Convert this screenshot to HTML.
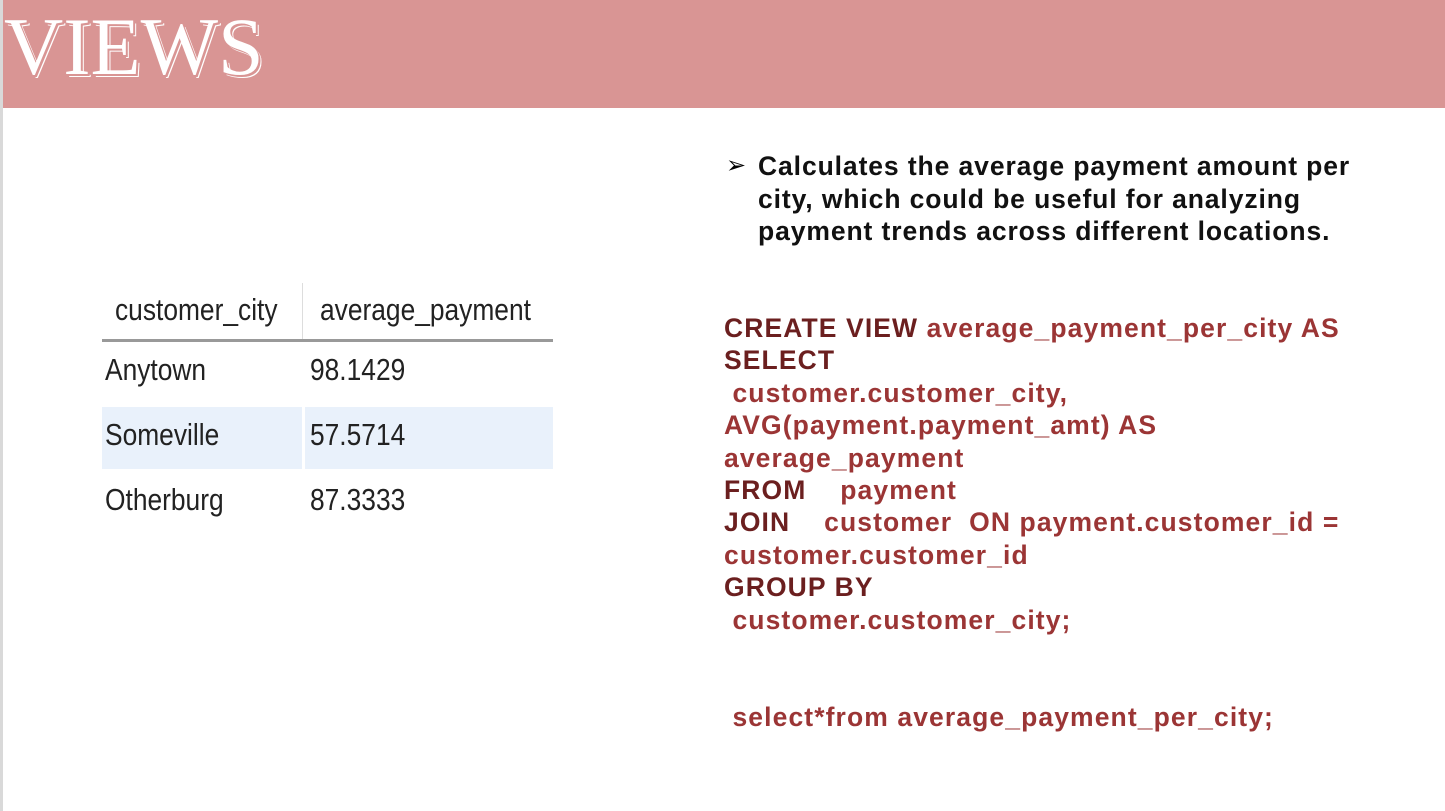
<!DOCTYPE html>
<html><head><meta charset="utf-8"><style>
body{margin:0;width:1445px;height:811px;background:#fff;position:relative;overflow:hidden;font-family:"Liberation Sans",sans-serif}
.lb{position:absolute;left:0;top:0;width:3px;height:811px;background:#d9d9d9}
.hdr{position:absolute;left:3px;top:0;width:1442px;height:108px;background:#d99594}
.title{position:absolute;left:4px;top:0px;font-family:"Liberation Serif",serif;font-size:82px;color:#fff;letter-spacing:0px;text-shadow:2px 2px 0 #d99594,3px 3px 0 #fff}
.tbl{position:absolute;left:102px;top:280px;width:451px;height:260px;font-size:31px;color:#222}
.tbl div{position:absolute;transform:scaleX(0.85);transform-origin:left center;white-space:nowrap}
.hl{position:absolute;left:102px;top:339px;width:451px;height:3px;background:#999}
.vl{position:absolute;left:302px;top:283px;width:1px;height:56px;background:#ddd}
.row2{position:absolute;left:102px;top:407px;width:451px;height:62px;background:#e9f1fb}
.row2gap{position:absolute;left:302px;top:407px;width:3px;height:62px;background:#fff}
.bul{position:absolute;left:758px;top:150px;font-size:26.5px;letter-spacing:0.9px;font-weight:bold;line-height:32.5px;color:#111}
.arr{position:absolute;left:726px;top:150px;font-size:24px;line-height:32.5px}
.code{position:absolute;left:724px;top:312px;font-size:26.5px;letter-spacing:1.1px;font-weight:bold;line-height:32.4px;color:#9b3535;white-space:pre}
.k{color:#6b1f1f}
</style></head><body>
<div class="lb"></div>
<div class="hdr"></div>
<div class="title">VIEWS</div>
<div class="row2"></div><div class="row2gap"></div>
<div class="hl"></div><div class="vl"></div>
<div class="tbl">
<div style="left:13px;top:12px">customer_city</div>
<div style="left:218px;top:12px">average_payment</div>
<div style="left:3px;top:72px">Anytown</div>
<div style="left:208px;top:72px">98.1429</div>
<div style="left:3px;top:137px">Someville</div>
<div style="left:208px;top:137px">57.5714</div>
<div style="left:3px;top:202px">Otherburg</div>
<div style="left:208px;top:202px">87.3333</div>
</div>
<div class="arr">➢</div>
<div class="bul">Calculates the average payment amount per<br>city, which could be useful for analyzing<br>payment trends across different locations.</div>
<div class="code"><span class="k">CREATE VIEW</span> average_payment_per_city AS
<span class="k">SELECT</span>
 customer.customer_city,
AVG(payment.payment_amt) AS
average_payment
<span class="k">FROM</span>    payment
<span class="k">JOIN</span>    customer  ON payment.customer_id =
customer.customer_id
<span class="k">GROUP BY</span>
 customer.customer_city;


 select*from average_payment_per_city;</div>
</body></html>
